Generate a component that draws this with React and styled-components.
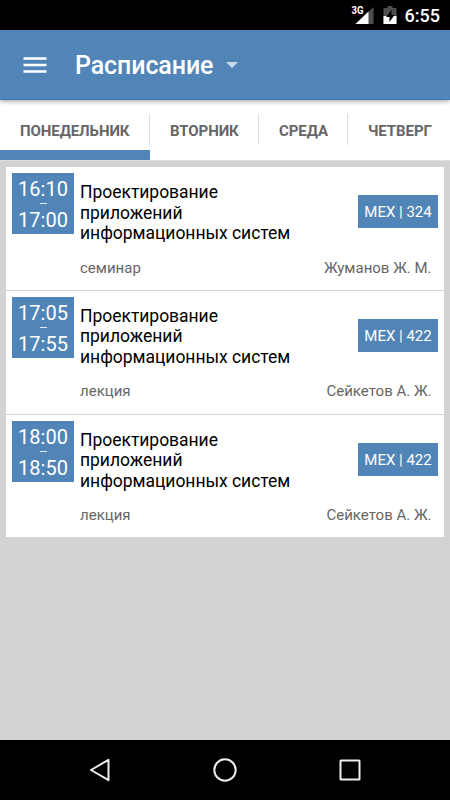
import React, { useState } from 'react';
import styled, { createGlobalStyle } from 'styled-components';

const GlobalStyle = createGlobalStyle`
    * {
        box-sizing: border-box;
    }
    body {
        margin: 0;
        background-color: #d3d3d3;
        font-family: Roboto, "Noto Sans", sans-serif;
    }
`

const Screen = styled.div`
    display: flex;
    flex-direction: column;
    width: 450px;
    height: 800px;
    overflow: hidden;
    background-color: #d3d3d3;
`

const StatusBar = styled.div`
    display: flex;
    flex: none;
    justify-content: flex-end;
    align-items: center;
    height: 30px;
    padding-right: 10px;
    background-color: #000000;
`

const Clock = styled.span`
    margin-left: 7px;
    padding-top: 1px;
    color: #ffffff;
    font-size: 18px;
    font-weight: 500;
    line-height: 30px;
`

const Header = styled.header`
    position: relative;
    display: flex;
    flex: none;
    align-items: center;
    height: 70px;
    padding-left: 23px;
    background-color: #5285b7;
    border-bottom: 1px solid #3f7cb3;
    box-shadow: 0 1px 5px rgba(0, 0, 0, 0.4);
`

const Title = styled.h1`
    margin: 3px 13px 0 28px;
    color: #ffffff;
    font-size: 25px;
    font-weight: 500;
    letter-spacing: -0.1px;
    line-height: 30px;
`

const Tabs = styled.nav`
    display: flex;
    flex: none;
    height: 61px;
    background-color: #ffffff;
    border-bottom: 1px solid #dedede;
`

const Tab = styled.button`
    display: flex;
    flex: none;
    align-items: center;
    width: ${({ $width }) => $width}px;
    padding: 0 0 0 20px;
    border: 0;
    border-bottom: 10px solid ${({ $active }) => ($active ? '#5285b7' : 'transparent')};
    background: none;
    color: #666666;
    font-family: inherit;
    font-size: 15px;
    font-weight: 700;
    letter-spacing: -0.08px;
    text-align: left;
    white-space: nowrap;
`

const TabLabel = styled.span`
    flex: 1;
    padding-top: 11px;
    line-height: 18px;
`

const Divider = styled.span`
    width: 1px;
    height: 31px;
    margin-top: 9px;
    background-color: #dddddd;
`

const List = styled.main`
    flex: 1;
    padding: 6px 6px 0;
`

const Lesson = styled.article`
    display: flex;
    height: ${({ $last }) => ($last ? 122.5 : 123.75)}px;
    padding: 6px 6px 0;
    background-color: #ffffff;
    border-bottom: ${({ $last }) => ($last ? '0' : '1px solid #d3d3d3')};
`

const Time = styled.div`
    display: flex;
    flex: none;
    flex-direction: column;
    align-items: center;
    width: 62px;
    height: 61px;
    padding-top: 4px;
    background-color: #5285b7;
    color: #ffffff;
    font-size: 20px;
    font-weight: 400;
    line-height: 24px;
`

const Dash = styled.span`
    width: 7px;
    height: 1px;
    margin: 2px 0 4px;
    background-color: #e4edf5;
`

const Info = styled.div`
    flex: 1;
    padding: 9px 0 0 6px;
`

const Top = styled.div`
    display: flex;
    justify-content: space-between;
`

const Subject = styled.h2`
    width: 230px;
    margin: 0;
    color: #000000;
    font-size: 17.5px;
    font-weight: 400;
    letter-spacing: -0.03px;
    line-height: 20.5px;
`

const Room = styled.span`
    flex: none;
    width: 80px;
    height: 33px;
    margin-top: 13px;
    background-color: #5285b7;
    color: #ffffff;
    font-size: 15px;
    line-height: 34px;
    text-align: center;
`

const Bottom = styled.div`
    display: flex;
    justify-content: space-between;
    padding: 15px 6.5px 0 0;
    color: #666666;
    font-size: 15px;
    line-height: 18px;
`

const NavBar = styled.footer`
    display: flex;
    flex: none;
    justify-content: space-around;
    align-items: center;
    height: 60px;
    padding: 0 37px;
    background-color: #000000;
`

const days = [
    { name: 'ПОНЕДЕЛЬНИК', width: 150 },
    { name: 'ВТОРНИК', width: 109 },
    { name: 'СРЕДА', width: 89 },
    { name: 'ЧЕТВЕРГ', width: 104 },
]

const subject = ['Проектирование', 'приложений', 'информационных систем']

const lessons = [
    { start: '16:10', end: '17:00', type: 'семинар', room: 'МЕХ | 324', teacher: 'Жуманов Ж. М.' },
    { start: '17:05', end: '17:55', type: 'лекция', room: 'МЕХ | 422', teacher: 'Сейкетов А. Ж.' },
    { start: '18:00', end: '18:50', type: 'лекция', room: 'МЕХ | 422', teacher: 'Сейкетов А. Ж.' },
]

// 3G signal and charging battery
const StatusIcons = () => (
    <svg width="50" height="30" viewBox="0 0 50 30">
        <text x="3.500" y="14" fill="#fff" fontSize="10" fontWeight="700" textLength="12" lengthAdjust="spacingAndGlyphs">3G</text>
        <path d="M25.500 7v17H7.500z" fill="#4d4d4d" />
        <path d="M20.500 11.500V24H7.500z" fill="#fff" />
        <path d="M39.500 6h5v2h4v16h-13V8h4z" fill="#4d4d4d" />
        <path d="M35.500 16h13v8h-13z" fill="#fff" />
        <path d="M43.500 10l-5.500 7h3.500v5l5-7H43.500z" fill="#000" />
    </svg>
)

const App = () => {
    const [day, setDay] = useState(0)

    return (
        <>
        <GlobalStyle />
        <Screen>
            <StatusBar>
                <StatusIcons />
                <Clock>6:55</Clock>
            </StatusBar>
            <Header>
                <svg width="24" height="18" viewBox="0 0 24 18">
                    <path d="M.5 2.500h23M.5 9h23M.5 15.500h23" stroke="#fff" strokeWidth="2.300" />
                </svg>
                <Title>Расписание</Title>
                <svg width="12" height="6" viewBox="0 0 12 6">
                    <path d="M0 0h12L6 6z" fill="#cbdae9" />
                </svg>
            </Header>
            <Tabs>
                {days.map((item, i) => (
                    <Tab key={item.name} $width={item.width} $active={day === i} onClick={() => setDay(i)}>
                        <TabLabel>{item.name}</TabLabel>
                        {i < days.length - 1 && <Divider />}
                    </Tab>
                ))}
            </Tabs>
            <List>
                {lessons.map((item, i) => (
                    <Lesson key={item.start} $last={i === lessons.length - 1}>
                        <Time>
                            <span>{item.start}</span>
                            <Dash />
                            <span>{item.end}</span>
                        </Time>
                        <Info>
                            <Top>
                                <Subject>
                                    {subject.map((line) => <div key={line}>{line}</div>)}
                                </Subject>
                                <Room>{item.room}</Room>
                            </Top>
                            <Bottom>
                                <span>{item.type}</span>
                                <span>{item.teacher}</span>
                            </Bottom>
                        </Info>
                    </Lesson>
                ))}
            </List>
            <NavBar>
                <svg width="24" height="24" viewBox="0 0 24 24">
                    <path d="M20.500 1.800v20.400L3 12z" fill="none" stroke="#eee" strokeWidth="2" strokeLinejoin="round" />
                </svg>
                <svg width="24" height="24" viewBox="0 0 24 24">
                    <circle cx="12" cy="12" r="10.700" fill="none" stroke="#eee" strokeWidth="2" />
                </svg>
                <svg width="24" height="24" viewBox="0 0 24 24">
                    <rect x="2.500" y="2.500" width="19" height="19" rx=".5" fill="none" stroke="#eee" strokeWidth="2" />
                </svg>
            </NavBar>
        </Screen>
        </>
    )
}

export default App;
